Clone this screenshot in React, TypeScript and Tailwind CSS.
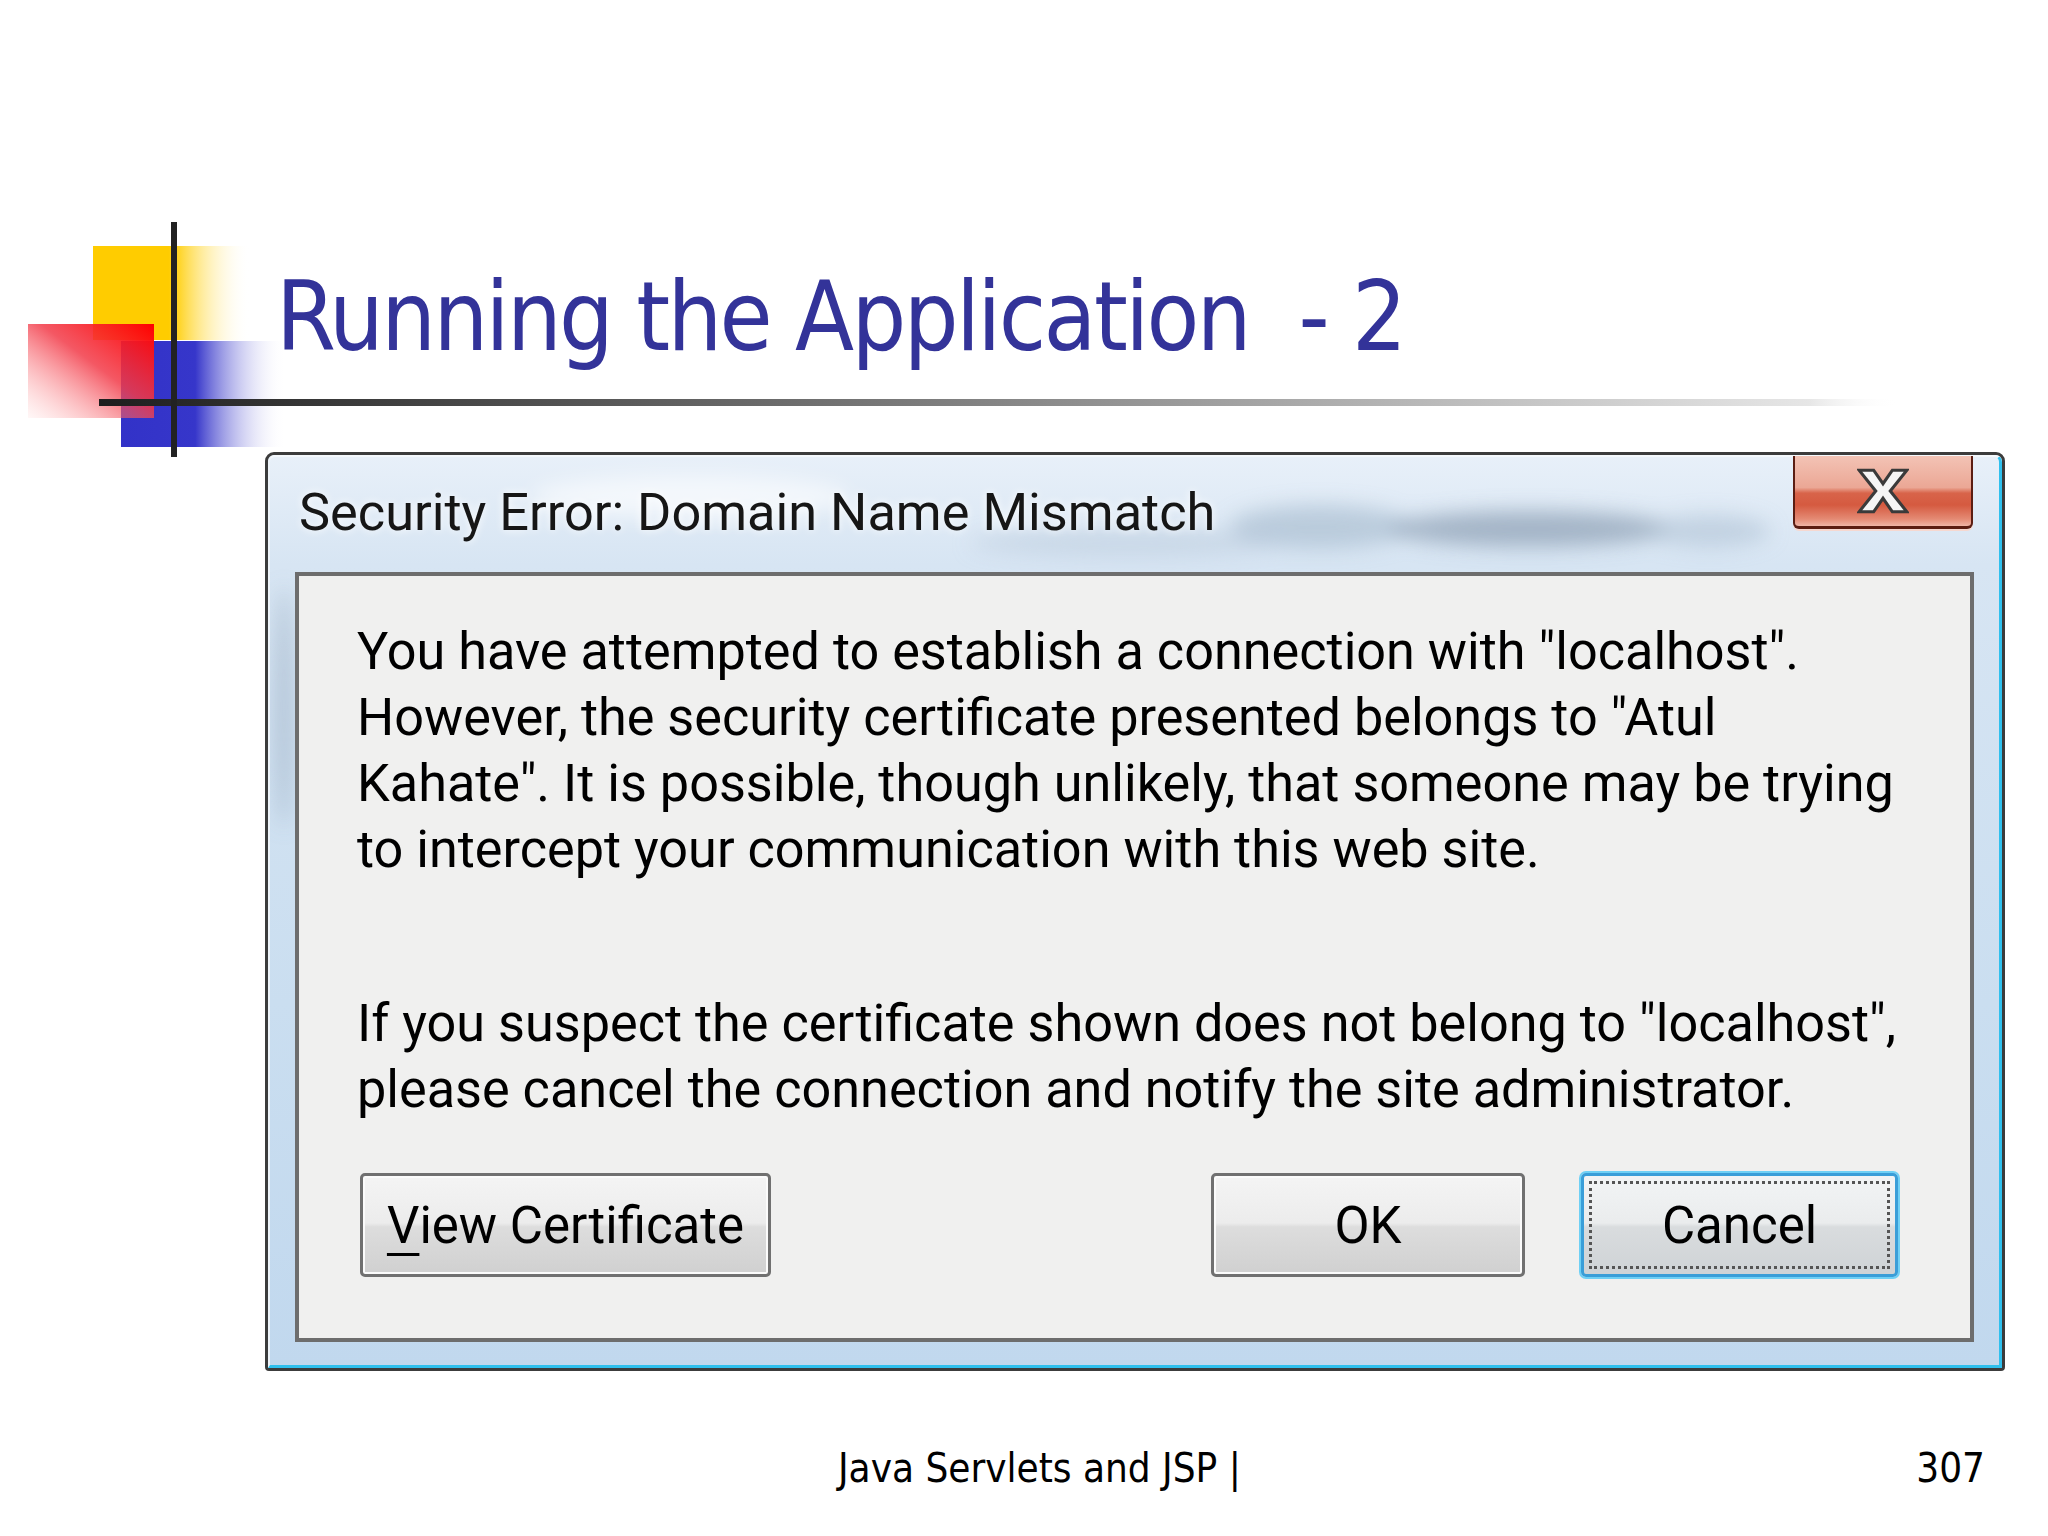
import React from "react";

// slide logo: mondrian blocks + cross lines + the long rule under the title
function SlideMark() {
  return (
    <svg className="absolute left-0 top-0" width="1920" height="470" viewBox="0 0 1920 470">
      <defs>
        <linearGradient id="yel" x1="0" y1="0" x2="1" y2="0">
          <stop offset="0" stopColor="#ffcc00" />
          <stop offset="0.48" stopColor="#ffcc00" />
          <stop offset="0.55" stopColor="#ffd52a" />
          <stop offset="1" stopColor="#ffffff" stopOpacity="0" />
        </linearGradient>
        <linearGradient id="blu" x1="0" y1="0" x2="1" y2="0">
          <stop offset="0" stopColor="#3232c8" />
          <stop offset="0.45" stopColor="#3636ca" />
          <stop offset="1" stopColor="#ffffff" stopOpacity="0" />
        </linearGradient>
        <linearGradient id="red" x1="1" y1="0" x2="0" y2="1">
          <stop offset="0" stopColor="#ff0000" />
          <stop offset="0.45" stopColor="#f23a48" stopOpacity="0.85" />
          <stop offset="1" stopColor="#ffb0b0" stopOpacity="0.1" />
        </linearGradient>
        <linearGradient id="rule" x1="0" y1="0" x2="1" y2="0">
          <stop offset="0" stopColor="#1e1e1e" />
          <stop offset="0.1" stopColor="#333333" />
          <stop offset="0.45" stopColor="#7a7a7a" />
          <stop offset="0.78" stopColor="#c2c2c2" />
          <stop offset="0.95" stopColor="#e6e6e6" />
          <stop offset="1" stopColor="#ffffff" stopOpacity="0" />
        </linearGradient>
      </defs>
      <rect x="93" y="246" width="157" height="94" fill="url(#yel)" />
      <rect x="121" y="341" width="165" height="106" fill="url(#blu)" />
      <rect x="28" y="324" width="126" height="94" fill="url(#red)" />
      <rect x="99" y="399" width="1800" height="7" fill="url(#rule)" />
      <rect x="171" y="222" width="6" height="235" fill="#222222" />
    </svg>
  );
}

function CloseGlyph() {
  return (
    <svg width="52" height="48" viewBox="-2 -2 50 44">
      <polygon
        points="0,0 14,0 23,13 32,0 46,0 30,20 46,40 32,40 23,27 14,40 0,40 16,20"
        fill="#f5f5f5"
        stroke="#3a3a3a"
        strokeWidth="3"
        strokeLinejoin="miter"
      />
    </svg>
  );
}

function DialogButton({ children, width, focused }: { children: React.ReactNode; width: string; focused?: boolean }) {
  if (focused) {
    return (
      <button
        className={`${width} h-[104px] rounded-[5px] border-[3px] border-[#3a9ed8] bg-[linear-gradient(#f2f4f5_0%,#eaeced_48%,#d9dcde_52%,#cfd3d6_100%)] p-[5px] shadow-[0_0_0_2px_#6fd0f5]`}
      >
        <span className="flex h-full w-full items-center justify-center border-[3px] border-dotted border-[#555555]">
          {children}
        </span>
      </button>
    );
  }
  return (
    <button
      className={`${width} h-[104px] rounded-[5px] border-[3px] border-[#707070] bg-[linear-gradient(#f4f4f4_0%,#ececec_48%,#dddddd_52%,#d0d0d0_100%)] shadow-[inset_0_0_0_2px_#fbfbfb] flex items-center justify-center`}
    >
      {children}
    </button>
  );
}

function SecurityDialog() {
  return (
    <div className="relative ml-[265px] h-[919px] w-[1740px] rounded-t-[9px] rounded-b-[4px] border-[3px] border-[#3c3c3c] bg-[linear-gradient(#e8f0f9_0%,#d7e5f3_12%,#cadef0_60%,#c1d8ee_100%)]">
      <div className="relative flex h-full flex-col rounded-t-[7px] border-t-[2px] border-l-[2px] border-r-[3px] border-b-[3px] border-t-[#f4f8fc] border-l-[#eef4fa] border-r-[#2fc0ee] border-b-[#2fc0ee]">
        {/* glass smudges on the frame */}
        <svg className="absolute left-0 top-0" width="1730" height="400" viewBox="0 0 1730 400">
          <defs>
            <filter id="blur" x="-50%" y="-50%" width="200%" height="200%">
              <feGaussianBlur stdDeviation="10" />
            </filter>
          </defs>
          <g filter="url(#blur)">
            <ellipse cx="420" cy="40" rx="160" ry="22" fill="#ffffff" opacity="0.6" />
            <ellipse cx="1050" cy="70" rx="90" ry="22" fill="#9fb4c8" opacity="0.55" />
            <ellipse cx="1260" cy="72" rx="140" ry="18" fill="#7f93a8" opacity="0.6" />
            <ellipse cx="1440" cy="74" rx="60" ry="16" fill="#a8bccf" opacity="0.5" />
            <ellipse cx="860" cy="86" rx="160" ry="14" fill="#b9cadb" opacity="0.5" />
            <ellipse cx="14" cy="250" rx="8" ry="120" fill="#8fa3b8" opacity="0.55" />
          </g>
        </svg>

        {/* title bar */}
        <div className="relative flex h-[115px] items-start justify-between">
          <div className="pl-[29px] pt-[29px] font-['Roboto',sans-serif] text-[52.3px] leading-none text-[#161616] [text-shadow:0_0_8px_#ffffff]">
            Security Error: Domain Name Mismatch
          </div>
          <div className="mr-[26px] mt-[-1px] flex h-[73px] w-[180px] items-center justify-center rounded-b-[6px] border-x-[2px] border-b-[3px] border-[#5b1d12] bg-[linear-gradient(#f3c3b5_0%,#eba795_45%,#d8644a_53%,#d55a40_70%,#e48a74_90%,#efb5a6_100%)] shadow-[0_2px_0_#f6d8d0]">
            <CloseGlyph />
          </div>
        </div>

        {/* content panel */}
        <div className="relative mx-[25px] mb-[23px] flex flex-1 flex-col border-[4px] border-[#6d6d6d] bg-[#f0f0ef] pl-[58px] pr-[72px] pt-[43px] font-['Roboto',sans-serif] text-black">
          <p className="whitespace-nowrap text-[52.2px] leading-[66px]">
            You have attempted to establish a connection with "localhost".
            <br />
            However, the security certificate presented belongs to "Atul
            <br />
            Kahate". It is possible, though unlikely, that someone may be trying
            <br />
            to intercept your communication with this web site.
          </p>
          <p className="mt-[108px] whitespace-nowrap text-[52.2px] leading-[66px]">
            If you suspect the certificate shown does not belong to "localhost",
            <br />
            please cancel the connection and notify the site administrator.
          </p>

          <div className="mt-[50px] flex items-center text-[51px] leading-none">
            <div className="ml-[3px]">
              <DialogButton width="w-[411px]">
                <span>
                  <span className="underline decoration-[3px] underline-offset-[10px]">V</span>iew Certificate
                </span>
              </DialogButton>
            </div>
            <div className="ml-auto flex gap-[56px]">
              <DialogButton width="w-[314px]">OK</DialogButton>
              <DialogButton width="w-[317px]" focused>
                Cancel
              </DialogButton>
            </div>
          </div>
        </div>
      </div>
    </div>
  );
}

export default function App() {
  return (
    <div className="flex h-[1536px] w-[2048px] flex-col overflow-hidden bg-white">
      <header className="relative h-[452px]">
        <SlideMark />
        <h1 className="relative whitespace-pre pl-[276px] pt-[269px] font-['DejaVu_Sans_Condensed','DejaVu_Sans',sans-serif] text-[96px] font-normal leading-none tracking-[-2.6px] text-[#333399]">
          {"Running the Application  - 2"}
        </h1>
      </header>

      <SecurityDialog />

      <footer className="mt-[77px] flex items-start pl-[838px] pr-[63px] font-['DejaVu_Sans_Condensed','DejaVu_Sans',sans-serif] text-[40px] leading-none text-black">
        <span>Java Servlets and JSP |</span>
        <span className="ml-auto">307</span>
      </footer>
    </div>
  );
}
